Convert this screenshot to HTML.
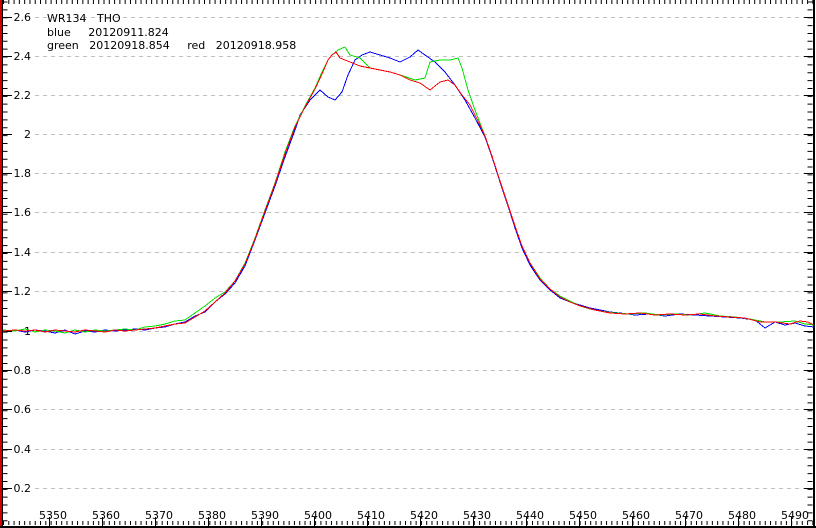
<!DOCTYPE html>
<html><head><style>
html,body{margin:0;padding:0;background:#fff;}
svg{display:block;}
text{font-family:"DejaVu Sans","Liberation Sans",sans-serif;font-size:11px;fill:#000;}
</style></head><body>
<svg width="816" height="528" xmlns="http://www.w3.org/2000/svg">
<rect width="816" height="528" fill="#fff"/>
<g stroke="#c0c0c0" stroke-width="1" stroke-dasharray="4,4">
<line x1="35" y1="17.5" x2="812" y2="17.5"/>
<line x1="35" y1="56.5" x2="812" y2="56.5"/>
<line x1="35" y1="95.5" x2="812" y2="95.5"/>
<line x1="35" y1="134.5" x2="812" y2="134.5"/>
<line x1="35" y1="173.5" x2="812" y2="173.5"/>
<line x1="35" y1="212.5" x2="812" y2="212.5"/>
<line x1="35" y1="252.5" x2="812" y2="252.5"/>
<line x1="35" y1="291.5" x2="812" y2="291.5"/>
<line x1="35" y1="331.5" x2="812" y2="331.5"/>
<line x1="35" y1="370.5" x2="812" y2="370.5"/>
<line x1="35" y1="409.5" x2="812" y2="409.5"/>
<line x1="35" y1="449.5" x2="812" y2="449.5"/>
<line x1="35" y1="488.5" x2="812" y2="488.5"/>
</g>
<rect x="0" y="0" width="2" height="528" fill="#d00000"/>
<rect x="2" y="0" width="1" height="528" fill="#000"/>
<rect x="0" y="526" width="816" height="2" fill="#000"/>
<rect x="813" y="0" width="2" height="528" fill="#000"/>
<g stroke="#000" stroke-width="1">
<line x1="3" y1="17.5" x2="12" y2="17.5"/><line x1="3" y1="56.5" x2="12" y2="56.5"/><line x1="3" y1="95.5" x2="12" y2="95.5"/><line x1="3" y1="134.5" x2="12" y2="134.5"/><line x1="3" y1="173.5" x2="12" y2="173.5"/><line x1="3" y1="212.5" x2="12" y2="212.5"/><line x1="3" y1="252.5" x2="12" y2="252.5"/><line x1="3" y1="291.5" x2="12" y2="291.5"/><line x1="3" y1="331.5" x2="12" y2="331.5"/><line x1="3" y1="370.5" x2="12" y2="370.5"/><line x1="3" y1="409.5" x2="12" y2="409.5"/><line x1="3" y1="449.5" x2="12" y2="449.5"/><line x1="3" y1="488.5" x2="12" y2="488.5"/>
<line x1="804" y1="17.5" x2="813" y2="17.5"/><line x1="804" y1="56.5" x2="813" y2="56.5"/><line x1="804" y1="95.5" x2="813" y2="95.5"/><line x1="804" y1="134.5" x2="813" y2="134.5"/><line x1="804" y1="173.5" x2="813" y2="173.5"/><line x1="804" y1="212.5" x2="813" y2="212.5"/><line x1="804" y1="252.5" x2="813" y2="252.5"/><line x1="804" y1="291.5" x2="813" y2="291.5"/><line x1="804" y1="331.5" x2="813" y2="331.5"/><line x1="804" y1="370.5" x2="813" y2="370.5"/><line x1="804" y1="409.5" x2="813" y2="409.5"/><line x1="804" y1="449.5" x2="813" y2="449.5"/><line x1="804" y1="488.5" x2="813" y2="488.5"/>
</g>
<line x1="5" y1="1" x2="5" y2="526" stroke="#000" stroke-width="5" stroke-dasharray="1,6.86" stroke-dashoffset="-0.5"/>
<line x1="810" y1="1" x2="810" y2="526" stroke="#000" stroke-width="5" stroke-dasharray="1,6.86" stroke-dashoffset="-0.5"/>
<line x1="3" y1="2" x2="813" y2="2" stroke="#000" stroke-width="4" stroke-dasharray="1,4.29"/>
<line x1="3" y1="523" x2="813" y2="523" stroke="#000" stroke-width="4" stroke-dasharray="1,4.29"/>
<g stroke="#000">
<line x1="49.5" y1="517" x2="49.5" y2="526"/><line x1="102.5" y1="517" x2="102.5" y2="526"/><line x1="155.5" y1="517" x2="155.5" y2="526"/><line x1="208.5" y1="517" x2="208.5" y2="526"/><line x1="261.5" y1="517" x2="261.5" y2="526"/><line x1="314.5" y1="517" x2="314.5" y2="526"/><line x1="367.5" y1="517" x2="367.5" y2="526"/><line x1="420.5" y1="517" x2="420.5" y2="526"/><line x1="473.5" y1="517" x2="473.5" y2="526"/><line x1="526.5" y1="517" x2="526.5" y2="526"/><line x1="579.5" y1="517" x2="579.5" y2="526"/><line x1="632.5" y1="517" x2="632.5" y2="526"/><line x1="685.5" y1="517" x2="685.5" y2="526"/><line x1="738.5" y1="517" x2="738.5" y2="526"/><line x1="791.5" y1="517" x2="791.5" y2="526"/>
</g>
<g text-anchor="end">
<text x="31" y="21">2.6</text><text x="31" y="60">2.4</text><text x="31" y="99">2.2</text><text x="31" y="138">2</text><text x="31" y="177">1.8</text><text x="31" y="216">1.6</text><text x="31" y="256">1.4</text><text x="31" y="295">1.2</text><text x="31" y="335">1</text><text x="31" y="374">0.8</text><text x="31" y="413">0.6</text><text x="31" y="453">0.4</text><text x="31" y="492">0.2</text>
</g>
<g text-anchor="middle">
<text x="53" y="519">5350</text><text x="106" y="519">5360</text><text x="159" y="519">5370</text><text x="212" y="519">5380</text><text x="265" y="519">5390</text><text x="318" y="519">5400</text><text x="371" y="519">5410</text><text x="424" y="519">5420</text><text x="477" y="519">5430</text><text x="530" y="519">5440</text><text x="583" y="519">5450</text><text x="636" y="519">5460</text><text x="689" y="519">5470</text><text x="742" y="519">5480</text><text x="795" y="519">5490</text>
</g>
<text x="47" y="22" xml:space="preserve">WR134   THO</text>
<text x="47" y="36" xml:space="preserve">blue     20120911.824</text>
<text x="47" y="49" xml:space="preserve">green   20120918.854     red   20120918.958</text>
<g fill="none" stroke-width="1" shape-rendering="crispEdges">
<polyline stroke="#0000ff" points="3,331 15,330 25,332 35,330 45,331 55,333 65,330 75,334 85,331 95,332 105,330 115,331 125,330 135,329 145,330 155,328 165,327 175,324 185,322 195,316 205,312 215,302 225,294 235,283 245,266 255,240 265,213 275,186 285,157 295,130 300,115 310,100 320,90 328,97 335,100 342,92 348,75 355,60 362,55 370,52 380,55 390,58 400,62 410,57 418,50 425,55 435,62 445,72 455,85 465,100 475,118 485,137 492,157 500,182 508,206 515,228 522,248 530,265 540,280 550,290 560,298 570,302 580,305 590,308 600,310 610,312 620,313 635,315 650,314 665,316 680,314 695,315 710,316 725,317 740,318 755,320 765,328 775,322 785,325 795,323 805,326 814,327"/>
<polyline stroke="#00e000" points="3,330 15,331 25,329 35,332 45,330 55,331 65,333 75,330 85,332 95,330 105,331 115,330 125,329 135,330 145,327 155,326 165,324 175,321 185,320 195,313 205,306 215,298 225,292 235,281 245,263 255,238 265,210 275,183 285,152 295,126 305,106 315,88 322,72 328,60 332,55 338,50 345,47 350,55 360,58 370,68 380,70 390,72 400,75 415,80 425,78 430,62 440,60 450,60 458,58 462,68 468,90 475,110 485,136 492,156 500,181 508,205 515,226 522,246 530,263 540,278 550,289 560,296 570,301 580,306 590,309 600,311 615,313 630,314 645,313 660,315 675,314 690,315 705,313 720,316 735,317 750,319 765,322 780,322 795,321 805,324 814,325"/>
<polyline stroke="#ff0000" points="3,331 15,330 25,331 35,330 45,332 55,330 65,331 75,332 85,330 95,331 105,332 115,330 125,331 135,330 145,329 155,328 165,326 175,324 185,323 195,317 205,311 215,302 225,293 235,281 245,264 255,239 265,211 275,184 285,154 295,127 305,107 315,89 322,74 328,60 332,55 336,52 340,58 350,62 360,66 370,68 380,70 390,72 400,75 410,80 420,83 430,90 440,82 448,80 455,85 462,95 470,105 478,121 485,136 492,156 500,181 508,205 515,226 522,246 530,263 540,279 550,289 560,297 570,302 580,306 595,310 610,313 625,314 640,313 655,315 670,314 685,315 700,314 715,316 730,317 745,318 760,322 775,322 790,324 800,321 808,322 814,325"/>
</g>
</svg>
</body></html>
